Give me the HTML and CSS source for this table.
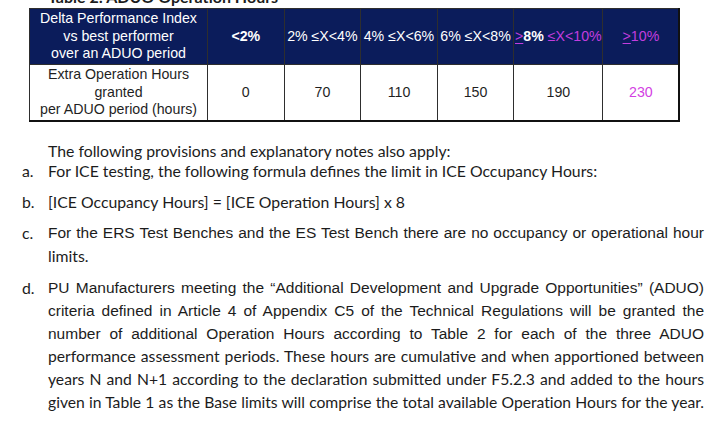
FILE: index.html
```html
<!DOCTYPE html>
<html lang="en">
<head>
<meta charset="utf-8">
<title>Table 2: ADUO Operation Hours</title>
<link rel="stylesheet" href="styles.css">
</head>
<body>
<h1 class="caption">Table 2: ADUO Operation Hours</h1>
<table class="aduo">
  <colgroup>
    <col class="c-label"><col class="c-n"><col class="c-n"><col class="c-n"><col class="c-n"><col class="c-wide"><col class="c-n">
  </colgroup>
  <tr class="head">
    <th>Delta Performance Index<br>vs best performer<br>over an ADUO period</th>
    <th><b>&lt;2%</b></th>
    <th>2% &le;X&lt;4%</th>
    <th class="soft">4% &le;X&lt;6%</th>
    <th>6% &le;X&lt;8%</th>
    <th><span class="mag ul">&gt;</span><b>8%</b> <span class="mag">&le;X&lt;10%</span></th>
    <th><span class="mag"><span class="ul">&gt;</span>10%</span></th>
  </tr>
  <tr class="body">
    <td>Extra Operation Hours<br>granted<br>per ADUO period (hours)</td>
    <td>0</td>
    <td>70</td>
    <td>110</td>
    <td>150</td>
    <td>190</td>
    <td class="mag2">230</td>
  </tr>
</table>

<p class="intro">The following provisions and explanatory notes also apply:</p>
<ol class="notes">
  <li class="note"><span class="lbl">a.</span><div class="txt">For ICE testing, the following formula defines the limit in ICE Occupancy Hours:</div></li>
  <li class="note"><span class="lbl">b.</span><div class="txt">[ICE Occupancy Hours] = [ICE Operation Hours] x 8</div></li>
  <li class="note"><span class="lbl">c.</span><div class="txt">
    <span class="ln just arial">For the ERS Test Benches and the ES Test Bench there are no occupancy or operational hour</span>
    <span class="ln">limits.</span>
  </div></li>
  <li class="note"><span class="lbl">d.</span><div class="txt">
    <span class="ln just arial">PU Manufacturers meeting the &ldquo;Additional Development and Upgrade Opportunities&rdquo; (ADUO)</span>
    <span class="ln just arial">criteria defined in Article 4 of Appendix C5 of the Technical Regulations will be granted the</span>
    <span class="ln just arial">number of additional Operation Hours according to Table 2 for each of the three ADUO</span>
    <span class="ln just tight">performance assessment periods. These hours are cumulative and when apportioned between</span>
    <span class="ln just tight">years N and N+1 according to the declaration submitted under F5.2.3 and added to the hours</span>
    <span class="ln just tight last">given in Table 1 as the Base limits will comprise the total available Operation Hours for the year.</span>
  </div></li>
</ol>
</body>
</html>
```
FILE: styles.css
```css
html, body {
  margin: 0;
  padding: 0;
  background: #ffffff;
}

body {
  color: #1c1c1c;
  font-family: "Lato", "Liberation Sans", sans-serif;
  font-size: 15.8px;
}

.caption {
  margin: -11px 0 0 48px;
  font: 700 16px/16px "Lato", "Liberation Sans", sans-serif;
  color: #1c1c1c;
}

/* ---------- table ---------- */
.aduo {
  margin: 3px 0 0 29px;
  width: 650px;
  table-layout: fixed;
  border-collapse: collapse;
  text-align: center;
  font: 14.2px/17.5px "Liberation Sans", Arial, sans-serif;
  border-top: 1px solid #222222;
  border-left: 1px solid #222222;
  border-right: 2px solid #111111;
  border-bottom: 2px solid #111111;
}

.c-label { width: 178px; }
.c-n { width: 76.6px; }
.c-wide { width: 89px; }

.aduo th,
.aduo td {
  padding: 0;
  height: 55px;
  border: 1px solid #2e2e2e;
  vertical-align: middle;
}

.aduo th {
  background: #0b1c5b;
  color: #ffffff;
  font-weight: 400;
}

.aduo th.soft {
  border-left-color: #7d8199;
}

.aduo td {
  color: #1f1f1f;
  background: #ffffff;
}

.aduo b {
  font-weight: 700;
}

.aduo .mag {
  color: #c23ddf;
}

.aduo td.mag2 {
  color: #d33fe3;
}

.ul {
  text-decoration: underline;
  text-underline-offset: 2px;
}

/* ---------- notes ---------- */
.intro {
  margin: 20px 0 0 48px;
  line-height: 17px;
}

.notes {
  list-style: none;
  margin: 0;
  padding: 0 0 0 20px;
}

.note {
  display: grid;
  grid-template-columns: 28px 656px;
  line-height: 23px;
  margin-top: 8px;
}

.note:first-child {
  margin-top: 0;
}

.note:last-child {
  margin-top: 9px;
}

.lbl {
  padding-left: 2px;
}

.ln {
  display: block;
}

.just {
  text-align: justify;
  text-align-last: justify;
}

.arial {
  font-family: "Liberation Sans", Arial, sans-serif;
  font-size: 15.5px;
}

.tight {
  font-size: 15.7px;
}

.last {
  letter-spacing: -0.02px;
}
```
